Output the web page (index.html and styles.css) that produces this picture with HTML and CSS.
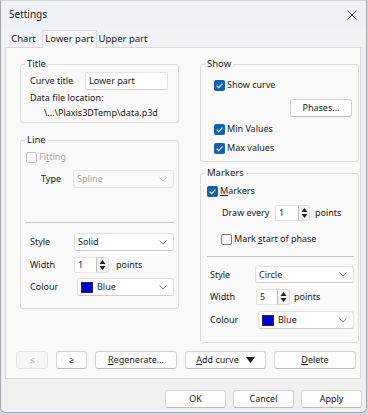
FILE: index.html
```html
<!DOCTYPE html>
<html>
<head>
<meta charset="utf-8">
<title>Settings</title>
<link rel="stylesheet" href="styles.css">
</head>
<body>
<div class="window">
  <div class="titlebar">
    <span class="title">Settings</span>
    <svg class="close" width="10" height="10" viewBox="0 0 10 10"><path d="M0.5 0.5L9.5 9.5M9.5 0.5L0.5 9.5" stroke="#3a3a3a" stroke-width="1" fill="none"/></svg>
  </div>
  <div class="tabs">
    <div class="tab t-chart">Chart</div>
    <div class="tab active t-lower">Lower part</div>
    <div class="tab t-upper">Upper part</div>
  </div>
  <div class="panel">
    <div class="columns">
      <div class="col">
        <fieldset class="group g-title">
          <legend>Title</legend>
          <div class="row r-curve"><span class="lbl l-curve">Curve title</span><span class="input i-curve">Lower part</span></div>
          <div class="text r-data">Data file location:</div>
          <div class="text r-path">\...\Plaxis3DTemp\data.p3d</div>
        </fieldset>
        <fieldset class="group g-line">
          <legend>Line</legend>
          <div class="check disabled r-fit"><span class="box"></span><span>Fi<u>t</u>ting</span></div>
          <div class="row r-type"><span class="lbl l-left l-type">Type</span><span class="select disabled s-type"><span>Spline</span><svg width="8" height="5" viewBox="0 0 8 5"><path d="M0.5 0.5L4 4L7.5 0.5" fill="none" stroke="#c4c4c4"/></svg></span></div>
          <div class="sep sep-left"></div>
          <div class="row r-lstyle"><span class="lbl l-left">Style</span><span class="select s-lstyle"><span>Solid</span><svg width="8" height="5" viewBox="0 0 8 5"><path d="M0.5 0.5L4 4L7.5 0.5" fill="none" stroke="#808080"/></svg></span></div>
          <div class="row r-lwidth"><span class="lbl l-left">Width</span><span class="spin"><span class="spin-val sv-lwidth">1</span><span class="arrows"><svg width="7" height="12" viewBox="0 0 7 12"><path d="M3.5 1L6.5 5H0.5Z M0.5 7H6.5L3.5 11Z" fill="#222"/></svg></span></span><span class="unit u-lwidth">points</span></div>
          <div class="row r-lcolour"><span class="lbl l-left">Colour</span><span class="select s-lcolour"><span class="swatch-wrap"><span class="swatch"></span><span>Blue</span></span><svg width="8" height="5" viewBox="0 0 8 5"><path d="M0.5 0.5L4 4L7.5 0.5" fill="none" stroke="#808080"/></svg></span></div>
        </fieldset>
      </div>
      <div class="col">
        <fieldset class="group g-show">
          <legend>Show</legend>
          <div class="check r-show"><span class="box on"><svg width="11" height="11" viewBox="0 0 11 11"><path d="M2.6 5.6L4.6 7.6L8.4 3.6" fill="none" stroke="#fff" stroke-width="1.2"/></svg></span><span>Show curve</span></div>
          <div class="row r-phases"><span class="btn b-phases">Phases...</span></div>
          <div class="check r-min"><span class="box on"><svg width="11" height="11" viewBox="0 0 11 11"><path d="M2.6 5.6L4.6 7.6L8.4 3.6" fill="none" stroke="#fff" stroke-width="1.2"/></svg></span><span>Min Values</span></div>
          <div class="check r-max"><span class="box on"><svg width="11" height="11" viewBox="0 0 11 11"><path d="M2.6 5.6L4.6 7.6L8.4 3.6" fill="none" stroke="#fff" stroke-width="1.2"/></svg></span><span>Max values</span></div>
        </fieldset>
        <fieldset class="group g-markers">
          <legend>Markers</legend>
          <div class="check r-markers"><span class="box on"><svg width="11" height="11" viewBox="0 0 11 11"><path d="M2.6 5.6L4.6 7.6L8.4 3.6" fill="none" stroke="#fff" stroke-width="1.2"/></svg></span><span><u>M</u>arkers</span></div>
          <div class="row r-draw"><span class="lbl l-draw">Draw every</span><span class="spin"><span class="spin-val sv-draw">1</span><span class="arrows a-draw"><svg width="7" height="12" viewBox="0 0 7 12"><path d="M3.5 1L6.5 5H0.5Z M0.5 7H6.5L3.5 11Z" fill="#222"/></svg></span></span><span class="unit u-draw">points</span></div>
          <div class="check r-mark"><span class="box"></span><span>Mark <u>s</u>tart of phase</span></div>
          <div class="sep sep-right"></div>
          <div class="row r-mstyle"><span class="lbl l-right">Style</span><span class="select s-mstyle"><span>Circle</span><svg width="8" height="5" viewBox="0 0 8 5"><path d="M0.5 0.5L4 4L7.5 0.5" fill="none" stroke="#808080"/></svg></span></div>
          <div class="row r-mwidth"><span class="lbl l-right">Width</span><span class="spin"><span class="spin-val sv-mwidth">5</span><span class="arrows"><svg width="7" height="12" viewBox="0 0 7 12"><path d="M3.5 1L6.5 5H0.5Z M0.5 7H6.5L3.5 11Z" fill="#222"/></svg></span></span><span class="unit u-mwidth">points</span></div>
          <div class="row r-mcolour"><span class="lbl l-right">Colour</span><span class="select s-mcolour"><span class="swatch-wrap"><span class="swatch"></span><span>Blue</span></span><svg width="8" height="5" viewBox="0 0 8 5"><path d="M0.5 0.5L4 4L7.5 0.5" fill="none" stroke="#808080"/></svg></span></div>
        </fieldset>
      </div>
    </div>
    <div class="actions">
      <span class="btn disabled b-prev">≤</span>
      <span class="btn b-next">≥</span>
      <span class="btn b-regen"><u>R</u>egenerate...</span>
      <span class="btn b-add"><span><u>A</u>dd curve</span><svg width="9" height="6" viewBox="0 0 9 6"><path d="M0 0H9L4.5 6Z" fill="#111"/></svg></span>
      <span class="btn b-del"><u>D</u>elete</span>
    </div>
  </div>
  <div class="footer">
    <span class="btn fbtn">OK</span>
    <span class="btn fbtn">Cancel</span>
    <span class="btn fbtn">Apply</span>
  </div>
</div>
</body>
</html>
```

FILE: styles.css
```css
* { box-sizing: border-box; }
html, body { margin: 0; padding: 0; }
body {
  width: 368px;
  height: 415px;
  overflow: hidden;
  background: #d3d6db;
  font-family: "Noto Sans", "Open Sans", sans-serif;
  font-size: 9px;
  line-height: 12px;
  color: #1b1b1b;
}
u { text-decoration: underline; text-underline-offset: 1px; }

.window {
  width: 367px;
  height: 413px;
  background: #f0f0f0;
  border: 1px solid #a4a8ad;
  border-top-color: #cfd3d8;
  border-radius: 0 0 6px 6px;
  display: flex;
  flex-direction: column;
  overflow: hidden;
}

.titlebar {
  height: 26px;
  flex: none;
  background: #eef2f7;
  display: flex;
  align-items: center;
  justify-content: space-between;
  padding: 0 9px 0 8px;
  font-size: 10px;
}
.close { margin-top: 1px; }

.tabs {
  height: 20px;
  flex: none;
  background: #f0f2f5;
  display: flex;
  align-items: flex-end;
  padding-left: 4px;
  position: relative;
  z-index: 1;
}
.tab {
  height: 15px;
  line-height: 14px;
  text-align: center;
  font-size: 9.5px;
}
.t-chart { width: 37px; }
.t-upper { width: 52px; }
.tab.active {
  width: 55px;
  height: 18px;
  line-height: 15px;
  margin-bottom: -1px;
  background: #f9f9f9;
  border: 1px solid #d9d9d9;
  border-bottom: none;
  border-radius: 2px 2px 0 0;
}

.panel {
  height: 332px;
  flex: none;
  margin: 0 5px 0 4px;
  background: #f9f9f9;
  border: 1px solid #d9d9d9;
  padding: 10px 1px 0 14px;
  display: flex;
  flex-direction: column;
}
.columns { display: flex; gap: 21px; }
.col { width: 159px; display: flex; flex-direction: column; }

.group {
  margin: 0;
  min-width: 0;
  border: 1px solid #dcdcdc;
  border-radius: 3px;
  padding: 0 4px 0 9px;
}
.group legend {
  padding: 0 2px;
  margin-left: -5px;
  line-height: 12px;
  font-size: 9.5px;
}
.g-title { padding-bottom: 3px; }
.g-line { margin-top: 11px; padding-bottom: 12px; }
.g-show { padding-bottom: 7px; }
.g-markers { margin-top: 5px; padding-bottom: 13px; }

.row { display: flex; align-items: center; }
.text { line-height: 12px; }
.lbl { flex: none; }

.r-curve { margin-top: 2px; }
.l-curve { width: 55px; }
.input {
  height: 18px;
  background: #fff;
  border: 1px solid #e4e4e4;
  border-bottom-color: #d0d0d0;
  border-radius: 2px;
  padding: 0 3px;
  display: flex;
  align-items: center;
}
.i-curve { width: 83px; }
.r-data { margin-top: 2px; }
.r-path { margin-top: 3px; padding-left: 14px; }

.check { display: flex; align-items: center; height: 12px; gap: 2px; }
.box {
  width: 11px;
  height: 11px;
  flex: none;
  border: 1px solid #7c7c7c;
  border-radius: 2px;
  background: #fdfdfd;
  display: flex;
}
.box.on { border: none; background: #0f62b4; }
.check.disabled { color: #a6a6a6; }
.check.disabled .box { border-color: #c6c6c6; background: #f9f9f9; }

.r-fit { margin-top: 5px; margin-left: -4px; }
.r-type { margin-top: 7px; }
.l-left { width: 44px; }
.l-type { padding-left: 11px; width: 43px; }

.select {
  height: 18px;
  background: #fff;
  border: 1px solid #e1e1e1;
  border-bottom-color: #cdcdcd;
  border-radius: 3px;
  padding: 0 6px 0 3px;
  display: flex;
  align-items: center;
  justify-content: space-between;
}
.select.disabled { background: #fafafa; border-color: #e6e6e6; color: #a6a6a6; }
.s-type { width: 101px; }
.s-lstyle { width: 100px; }
.s-lcolour { width: 99px; margin-left: 3px; height: 18px; }
.s-mstyle { width: 99px; height: 17px; }
.s-mcolour { width: 100px; margin-left: 3px; }

.swatch-wrap { display: flex; align-items: center; gap: 4px; }
.swatch {
  width: 12px;
  height: 11px;
  background: #0000c8;
  border: 1px solid #20206a;
}

.sep { height: 1px; background: #c8c8c8; }
.sep-left { margin-top: 34px; margin-left: -5px; width: 149px; }
.sep-right { margin-top: 11px; margin-left: -3px; width: 147px; }

.r-lstyle { margin-top: 10px; }
.r-lwidth { margin-top: 6px; }
.r-lcolour { margin-top: 5px; }

.spin { display: flex; height: 16px; }
.spin-val {
  background: #fff;
  border: 1px solid #e4e4e4;
  border-right-color: #bdbdbd;
  border-radius: 2px 0 0 2px;
  padding: 0 3px;
  display: flex;
  align-items: center;
}
.sv-lwidth { width: 23px; }
.sv-draw { width: 24px; }
.sv-mwidth { width: 22px; }
.arrows {
  width: 12px;
  height: 16px;
  display: flex;
  align-items: center;
  justify-content: center;
  background: #f3f3f3;
  border: 1px solid #dcdcdc;
  border-left: none;
  border-radius: 0 3px 3px 0;
}
.a-draw { width: 11px; }
.unit { flex: none; }
.u-lwidth { margin-left: 7px; }
.u-draw { margin-left: 5px; }
.u-mwidth { margin-left: 4px; }

.r-show { margin-top: 9px; margin-left: 4px; }
.r-phases { margin-top: 8px; justify-content: flex-end; margin-right: 2px; }
.b-phases { width: 62px; height: 19px; border-color: #7f97b6; }
.r-min { margin-top: 6px; margin-left: 4px; }
.r-max { margin-top: 7px; margin-left: 4px; }

.r-markers { margin-top: 6px; margin-left: -3px; }
.r-draw { margin-top: 8px; margin-left: 12px; }
.l-draw { width: 53px; }
.r-mark { margin-top: 12px; margin-left: 11px; }
.l-right { width: 45px; }
.r-mstyle { margin-top: 9px; }
.r-mwidth { margin-top: 6px; }
.r-mwidth .lbl { width: 46px; }
.r-mcolour { margin-top: 6px; }

.btn {
  height: 18px;
  background: #fdfdfd;
  border: 1px solid #d3d3d3;
  border-bottom-color: #bcbcbc;
  border-radius: 3px;
  display: flex;
  align-items: center;
  justify-content: center;
  flex: none;
}
.btn.disabled { background: #f7f7f7; border-color: #e3e3e3; color: #a8a8a8; }

.actions { display: flex; gap: 8px; margin-top: 8px; margin-left: -4px; }
.b-prev { width: 32px; }
.b-next { width: 31px; }
.b-regen { width: 82px; }
.b-add { width: 81px; gap: 7px; }
.b-del { width: 82px; }

.footer {
  flex: 1;
  display: flex;
  justify-content: flex-end;
  align-items: flex-start;
  gap: 7px;
  padding: 11px 4px 0 0;
  background: #f0f0f0;
}
.fbtn { width: 61px; }
```
